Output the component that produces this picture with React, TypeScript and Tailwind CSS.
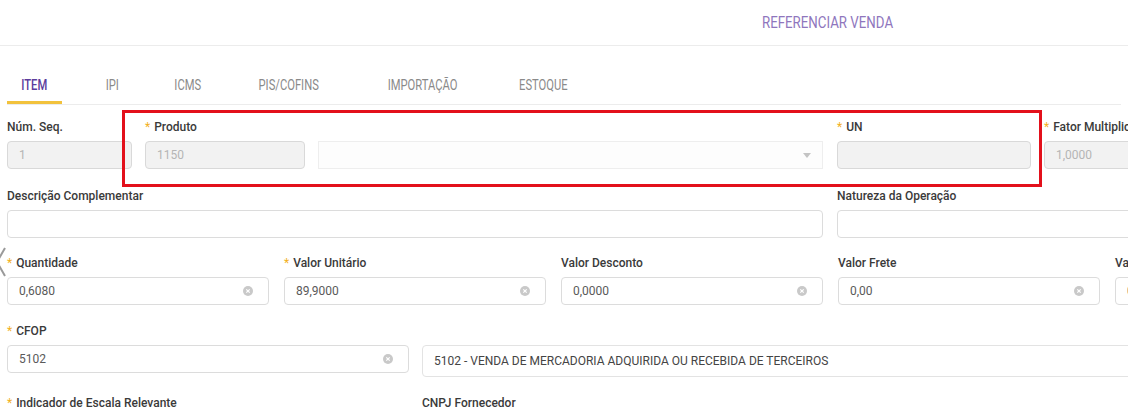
import React from 'react'

const font = { fontFamily: 'Roboto, "Noto Sans", sans-serif' }

function ClearIcon() {
  return (
    <svg width="10" height="10" viewBox="0 0 10 10" className="shrink-0">
      <circle cx="5" cy="5" r="5" fill="#c9c9c9" />
      <path d="M3.3 3.3 L6.7 6.7 M6.7 3.3 L3.3 6.7" stroke="#fff" strokeWidth="1.2" />
    </svg>
  )
}

type FieldProps = {
  label: string
  required?: boolean
  value?: string
  width: string
  disabled?: boolean
  clear?: boolean
}

function Label({ label, required }: { label: string; required?: boolean }) {
  return (
    <div className="h-5 leading-5 text-[12px] font-medium text-[#3a3a3a] whitespace-nowrap">
      {required && <span className="text-[#f2b01e] mr-[4px] font-normal">*</span>}
      {label}
    </div>
  )
}

function Field({ label, required, value, width, disabled, clear }: FieldProps) {
  return (
    <div className={`${width} shrink-0 flex flex-col`}>
      <Label label={label} required={required} />
      <div
        className={`mt-1 h-7 rounded-[4px] border flex items-center px-[11px] text-[12px] ${
          disabled ? 'bg-[#f2f2f2] border-[#d9d9d9] text-[#b5b5b5]' : 'bg-white border-[#dcdcdc] text-[#5a5a5a]'
        }`}
      >
        <span className="flex-1 truncate">{value}</span>
        {clear && (
          <span className="mr-[4px]">
            <ClearIcon />
          </span>
        )}
      </div>
    </div>
  )
}

const tabs = [
  { name: 'ITEM', w: 'w-[55px]' },
  { name: 'IPI', w: 'w-[101px]' },
  { name: 'ICMS', w: 'w-[50px]' },
  { name: 'PIS/COFINS', w: 'w-[152px]' },
  { name: 'IMPORTAÇÃO', w: 'w-[115px]' },
  { name: 'ESTOQUE', w: 'w-[127px]' },
]

export default function App() {
  return (
    <div className="relative w-[1128px] h-[410px] overflow-hidden bg-white" style={font}>
      <header className="h-[46px] border-b border-[#ececec] flex items-center pl-[762px]">
        <span className="inline-block origin-left scale-x-[0.83] text-[16px] text-[#8f76bd] whitespace-nowrap">
          REFERENCIAR VENDA
        </span>
      </header>

      <nav className="h-[59px] mx-[7px] border-b border-[#ececec] flex items-end">
        {tabs.map((t, i) => (
          <div
            key={t.name}
            className={`${t.w} shrink-0 h-[27px] flex justify-center items-start ${
              i === 0 ? 'border-b-[3px] border-[#f2c23c]' : ''
            }`}
          >
            <span
              className={`inline-block scale-x-[0.8] text-[14px] leading-4 whitespace-nowrap ${
                i === 0 ? 'text-[#5b3c9c] font-medium' : 'text-[#8a8a8a]'
              }`}
            >
              {t.name}
            </span>
          </div>
        ))}
      </nav>

      <main className="pl-[7px] pt-[12px] w-[1400px] flex flex-col gap-4">
        <div className="flex gap-[13px]">
          <Field label="Núm. Seq." value="1" width="w-[125px]" disabled />
          <div className="flex flex-col">
            <Label label="Produto" required />
            <div className="mt-1 flex gap-[13px]">
              <div className="w-[160px] h-7 rounded-[4px] border border-[#d9d9d9] bg-[#f2f2f2] flex items-center px-[11px] text-[12px] text-[#b5b5b5]">
                1150
              </div>
              <div className="w-[505px] h-7 border border-[#eeeeee] bg-[#fdfdfd] flex items-center justify-end pr-[11px]">
                <svg width="8" height="5" viewBox="0 0 8 5">
                  <path d="M0 0 L8 0 L4 5 Z" fill="#c4c4c4" />
                </svg>
              </div>
            </div>
          </div>
          <div className="ml-px">
            <Field label="UN" required value="" width="w-[194px]" disabled />
          </div>
          <Field label="Fator Multiplicador" required value="1,0000" width="w-[194px]" disabled />
        </div>

        <div className="flex gap-[14px] mt-[1px]">
          <Field label="Descrição Complementar" value="" width="w-[816px]" />
          <Field label="Natureza da Operação" value="" width="w-[400px]" />
        </div>

        <div className="flex gap-[15px] -mt-[1px]">
          <Field label="Quantidade" required value="0,6080" width="w-[262px]" clear />
          <Field label="Valor Unitário" required value="89,9000" width="w-[262px]" clear />
          <Field label="Valor Desconto" value="0,0000" width="w-[262px]" clear />
          <Field label="Valor Frete" value="0,00" width="w-[262px]" clear />
          <Field label="Valor Seguro" value="0,00" width="w-[262px]" clear />
        </div>

        <div className="flex flex-col">
          <Label label="CFOP" required />
          <div className="mt-1 flex gap-[13px] items-start">
            <div className="w-[402px] h-7 rounded-[4px] border border-[#dcdcdc] flex items-center px-[11px] text-[12px] text-[#5a5a5a]">
              <span className="flex-1">5102</span>
              <span className="mr-[4px]">
                <ClearIcon />
              </span>
            </div>
            <div className="w-[800px] h-8 rounded-[4px] border border-[#e3e3e3] flex items-center px-[11px] text-[12px] text-[#444]">
              5102 - VENDA DE MERCADORIA ADQUIRIDA OU RECEBIDA DE TERCEIROS
            </div>
          </div>
        </div>

        <div className="flex gap-[13px]">
          <div className="w-[402px]">
            <Label label="Indicador de Escala Relevante" required />
          </div>
          <Label label="CNPJ Fornecedor" />
        </div>
      </main>

      {/* highlight box drawn over the form */}
      <div className="absolute left-[122px] top-[110px] w-[920px] h-[77px] border-[3px] border-[#e3101b] pointer-events-none" />

      {/* carousel arrow peeking from the left edge */}
      <svg className="absolute left-[-5px] top-[246px]" width="12" height="32" viewBox="0 0 12 32">
        <path d="M10 2 L2 16 L10 30" fill="none" stroke="#9a9a9a" strokeWidth="2" />
      </svg>
    </div>
  )
}
